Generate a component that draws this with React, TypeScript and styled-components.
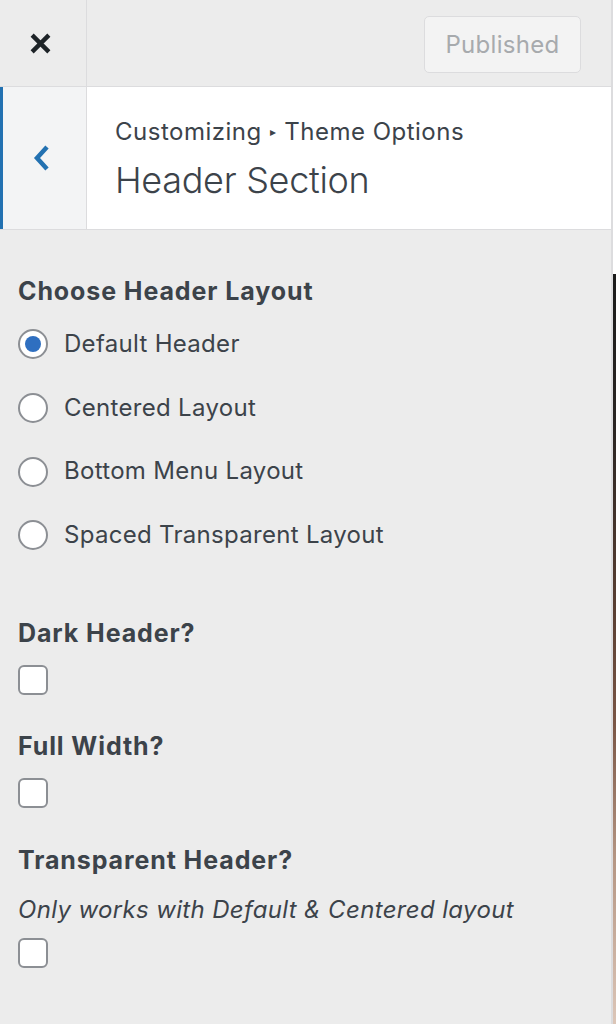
import React from "react";
import styled, { createGlobalStyle } from "styled-components";

const Global = createGlobalStyle`
  html, body { margin: 0; padding: 0; background: #ececec; }
  body { font-family: Inter, "Noto Sans", "Liberation Sans", sans-serif; -webkit-font-smoothing: antialiased; }
  * { box-sizing: border-box; }
`;

const Shell = styled.div`
  display: flex;
  width: 616px;
  height: 1024px;
  overflow: hidden;
`;

const Sidebar = styled.div`
  width: 613px;
  flex: none;
  display: flex;
  flex-direction: column;
  background: #ececec;
  border-right: 2px solid #dcdcde;
`;

const Preview = styled.div`
  flex: 1;
  display: flex;
  flex-direction: column;
`;

const PreviewBlank = styled.div`
  height: 274px;
  background: #ffffff;
`;

const PreviewImage = styled.div`
  flex: 1;
  background: linear-gradient(
    180deg,
    #1b1b1b 0%,
    #2a2523 20%,
    #5a3f33 45%,
    #7a5646 60%,
    #b59684 78%,
    #dcc6b8 100%
  );
`;

const TopBar = styled.div`
  height: 87px;
  display: flex;
  align-items: stretch;
  border-bottom: 1px solid #dcdcde;
`;

const CloseButton = styled.div`
  width: 87px;
  display: flex;
  align-items: center;
  justify-content: center;
  border-right: 1px solid #dcdcde;
  color: #1d2327;
  padding-right: 6px;
`;

const TopActions = styled.div`
  flex: 1;
  display: flex;
  align-items: flex-start;
  justify-content: flex-end;
  padding: 16px 30px 0 0;
`;

const PublishButton = styled.div`
  width: 157px;
  height: 57px;
  border: 1px solid #dcdcde;
  border-radius: 5px;
  background: #f3f3f3;
  color: #a7aaad;
  font-size: 24px;
  letter-spacing: 0.3px;
  display: flex;
  align-items: center;
  justify-content: center;
`;

const SectionHeader = styled.div`
  height: 143px;
  display: flex;
  background: #ffffff;
  border-bottom: 1px solid #dcdcde;
`;

const BackButton = styled.div`
  width: 87px;
  background: #f3f4f5;
  border-left: 3px solid #2271b1;
  border-right: 1px solid #dcdcde;
  display: flex;
  align-items: center;
  justify-content: center;
  color: #2271b1;
  padding-right: 6px;
`;

const TitleBlock = styled.div`
  flex: 1;
  display: flex;
  flex-direction: column;
  justify-content: center;
  padding-left: 28px;
  padding-top: 6px;
  color: #3c434a;
`;

const Breadcrumb = styled.div`
  font-size: 24px;
  letter-spacing: 0.5px;
  line-height: 30px;
  color: #3c434a;
  display: flex;
  align-items: center;
  gap: 8px;
`;

const Arrow = styled.span`
  font-size: 12px;
`;

const Title = styled.div`
  font-size: 36px;
  font-weight: 300;
  line-height: 50px;
  margin-top: 8px;
  letter-spacing: -0.3px;
`;

const Content = styled.div`
  padding: 45px 18px 0 18px;
  color: #3c434a;
`;

const Control = styled.div<{ $gap?: number }>`
  margin-bottom: ${(p) => p.$gap ?? 0}px;
`;

const ControlTitle = styled.div`
  font-size: 25px;
  font-weight: 700;
  letter-spacing: 0.9px;
  line-height: 32px;
  color: #3c434a;
`;

const Description = styled.div`
  font-size: 24px;
  font-style: italic;
  letter-spacing: 0.35px;
  line-height: 32px;
  margin-top: 18px;
  color: #3c434a;
`;

const RadioList = styled.div`
  display: flex;
  flex-direction: column;
  gap: 33px;
  margin-top: 22px;
`;

const RadioRow = styled.label`
  display: flex;
  align-items: center;
  gap: 16px;
  font-size: 24px;
  letter-spacing: 0.3px;
  line-height: 30.7px;
`;

const RadioCircle = styled.span<{ $checked?: boolean }>`
  width: 30px;
  height: 30px;
  flex: none;
  border-radius: 50%;
  border: 2px solid #8c8f94;
  background: #ffffff;
  display: flex;
  align-items: center;
  justify-content: center;
  &::after {
    content: "";
    width: 16px;
    height: 16px;
    border-radius: 50%;
    background: ${(p) => (p.$checked ? "#2f6fc0" : "transparent")};
  }
`;

const Checkbox = styled.span<{ $top: number }>`
  display: block;
  width: 30px;
  height: 30px;
  margin-top: ${(p) => p.$top}px;
  border: 2px solid #8c8f94;
  border-radius: 6px;
  background: #ffffff;
`;

const radios = [
  "Default Header",
  "Centered Layout",
  "Bottom Menu Layout",
  "Spaced Transparent Layout",
];

export default function App() {
  return (
    <>
      <Global />
      <Shell>
        <Sidebar>
          <TopBar>
            <CloseButton>
              <svg width="23" height="23" viewBox="0 0 22 22">
                <path d="M3 3 L19 19 M19 3 L3 19" stroke="currentColor" strokeWidth="4.2" strokeLinecap="butt" />
              </svg>
            </CloseButton>
            <TopActions>
              <PublishButton>Published</PublishButton>
            </TopActions>
          </TopBar>
          <SectionHeader>
            <BackButton>
              <svg width="18" height="28" viewBox="0 0 18 28">
                <path d="M14 3 L4 14 L14 25" fill="none" stroke="currentColor" strokeWidth="4.5" strokeLinejoin="miter" />
              </svg>
            </BackButton>
            <TitleBlock>
              <Breadcrumb>
                Customizing <Arrow>▸</Arrow> Theme Options
              </Breadcrumb>
              <Title>Header Section</Title>
            </TitleBlock>
          </SectionHeader>
          <Content>
            <Control $gap={66}>
              <ControlTitle>Choose Header Layout</ControlTitle>
              <RadioList>
                {radios.map((r, i) => (
                  <RadioRow key={r}>
                    <RadioCircle $checked={i === 0} />
                    {r}
                  </RadioRow>
                ))}
              </RadioList>
            </Control>
            <Control $gap={35}>
              <ControlTitle>Dark Header?</ControlTitle>
              <Checkbox $top={16} />
            </Control>
            <Control $gap={36}>
              <ControlTitle>Full Width?</ControlTitle>
              <Checkbox $top={16} />
            </Control>
            <Control>
              <ControlTitle>Transparent Header?</ControlTitle>
              <Description>Only works with Default &amp; Centered layout</Description>
              <Checkbox $top={12} />
            </Control>
          </Content>
        </Sidebar>
        <Preview>
          <PreviewBlank />
          <PreviewImage />
        </Preview>
      </Shell>
    </>
  );
}
